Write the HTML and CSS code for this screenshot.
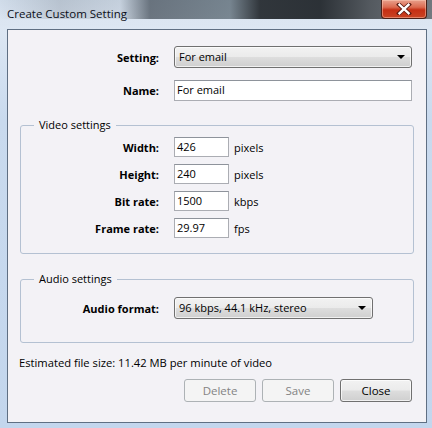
FILE: index.html
```html
<!DOCTYPE html>
<html>
<head>
<meta charset="utf-8">
<link rel="stylesheet" href="styles.css">
</head>
<body>
<div class="window">
  <div class="titlebar">
    <span class="title">Create Custom Setting</span>
    <span class="close-btn">
      <svg width="16" height="12" viewBox="0 0 16 12"><path d="M3 1.5 L13 10.5 M13 1.5 L3 10.5" stroke="#5a1a10" stroke-width="4" stroke-linecap="square"/><path d="M3.5 1.8 L12.5 10.2 M12.5 1.8 L3.5 10.2" stroke="#ffffff" stroke-width="2.4" stroke-linecap="square"/></svg>
    </span>
  </div>
  <div class="client">
    <div class="row row-setting">
      <span class="lbl">Setting:</span>
      <span class="combo combo-setting">For email<span class="arrow"></span></span>
    </div>
    <div class="row row-name">
      <span class="lbl">Name:</span>
      <span class="textbox textbox-name">For email</span>
    </div>

    <fieldset class="group group-video">
      <legend>Video settings</legend>
      <div class="frow">
        <span class="lbl lbl-in">Width:</span>
        <span class="textbox textbox-num">426</span>
        <span class="unit">pixels</span>
      </div>
      <div class="frow">
        <span class="lbl lbl-in">Height:</span>
        <span class="textbox textbox-num">240</span>
        <span class="unit">pixels</span>
      </div>
      <div class="frow">
        <span class="lbl lbl-in">Bit rate:</span>
        <span class="textbox textbox-num">1500</span>
        <span class="unit">kbps</span>
      </div>
      <div class="frow">
        <span class="lbl lbl-in">Frame rate:</span>
        <span class="textbox textbox-num">29.97</span>
        <span class="unit">fps</span>
      </div>
    </fieldset>

    <fieldset class="group group-audio">
      <legend>Audio settings</legend>
      <div class="frow">
        <span class="lbl lbl-in">Audio format:</span>
        <span class="combo combo-audio">96 kbps, 44.1 kHz, stereo<span class="arrow"></span></span>
      </div>
    </fieldset>

    <p class="estimate">Estimated file size: 11.42 MB per minute of video</p>

    <div class="buttons">
      <span class="btn btn-disabled">Delete</span>
      <span class="btn btn-disabled">Save</span>
      <span class="btn">Close</span>
    </div>
  </div>
</div>
</body>
</html>
```
FILE: styles.css
```css
html, body {
  margin: 0;
  padding: 0;
}
body {
  font-family: "Open Sans", "Noto Sans", sans-serif;
  font-size: 11px;
  color: #000;
  background: #c8d8ec;
}
.window {
  width: 432px;
  height: 428px;
  box-sizing: border-box;
  padding: 0 5px 5px 7px;
  display: flex;
  flex-direction: column;
  background:
    linear-gradient(to right,
      rgba(110,120,130,0) 0px,
      rgba(110,120,130,0.25) 60px,
      rgba(150,160,170,0.2) 120px,
      rgba(70,80,90,0.75) 150px,
      rgba(80,95,105,0.7) 230px,
      rgba(40,45,50,0.95) 260px,
      rgba(35,40,45,0.95) 320px,
      rgba(70,75,80,0.9) 370px,
      rgba(90,95,100,0.8) 432px) top left / 100% 19px no-repeat,
    linear-gradient(to bottom, rgba(255,255,255,0) 0, rgba(255,255,255,0) 14px, rgba(220,230,242,0.9) 22px, rgba(220,230,242,0) 30px) top left / 100% 30px no-repeat,
    linear-gradient(to bottom, #cfdbe9 0, #dde7f3 28px, #c9daee 120px, #c3d6ed 428px);
}
.titlebar {
  height: 29px;
  display: flex;
  justify-content: space-between;
  align-items: flex-start;
  flex-shrink: 0;
}
.title {
  margin-top: 5px;
  line-height: 17px;
  font-size: 11.5px;
  color: #0b0f18;
}
.close-btn {
  width: 46px;
  height: 19px;
  box-sizing: border-box;
  border: 1px solid #4a2018;
  border-top: none;
  border-radius: 0 0 4px 4px;
  background: linear-gradient(to bottom, #e8a08c 0, #db6a50 40%, #c52f14 55%, #c94424 100%);
  box-shadow: inset 0 0 0 1px rgba(255,210,190,0.45);
  display: flex;
  align-items: center;
  justify-content: center;
}
.close-btn svg {
  display: block;
}
.client {
  width: 420px;
  height: 394px;
  box-sizing: border-box;
  border: 1px solid #5f6f83;
  background: #f3f2f6;
  padding: 16px 14px 0 12px;
  display: flex;
  flex-direction: column;
}
.row {
  display: flex;
  align-items: center;
}
.row-name {
  margin-top: 12px;
}
.lbl {
  width: 139px;
  flex-shrink: 0;
  text-align: right;
  font-weight: bold;
  margin-right: 15px;
}
.lbl-in {
  width: 138px;
}
.combo {
  position: relative;
  height: 22px;
  box-sizing: border-box;
  border: 1px solid #707070;
  border-radius: 3px;
  background: linear-gradient(to bottom, #f2f2f2 0, #ebebeb 48%, #dddddd 52%, #cfcfcf 100%);
  padding-left: 4px;
  line-height: 20px;
  box-shadow: inset 0 0 0 1px rgba(255,255,255,0.7);
}
.combo-setting {
  width: 238px;
}
.combo-audio {
  width: 199px;
}
.arrow {
  position: absolute;
  right: 6px;
  top: 8px;
  width: 0;
  height: 0;
  border-left: 4px solid transparent;
  border-right: 4px solid transparent;
  border-top: 4px solid #000;
}
.textbox {
  height: 21px;
  box-sizing: border-box;
  border: 1px solid #abadb3;
  border-top-color: #8e939b;
  background: #fff;
  padding-left: 2px;
  line-height: 18px;
}
.textbox-name {
  width: 240px;
}
.textbox-num {
  width: 55px;
  height: 20px;
  line-height: 17px;
}
.unit {
  margin-left: 5px;
}
.group {
  margin: 0;
  padding: 0;
  width: 394px;
  box-sizing: border-box;
  border: 1px solid #b4c1d2;
  border-radius: 3px;
}
.group legend {
  margin-left: 13px;
  padding: 0 5px;
  line-height: 16px;
  color: #000;
}
.group-video {
  margin-top: 16px;
  padding: 4px 0 15px 0;
}
.group-video .frow + .frow {
  margin-top: 7px;
}
.group-audio {
  margin-top: 17px;
  padding: 10px 0 23px 0;
}
.frow {
  display: flex;
  align-items: center;
}
.estimate {
  margin: 12px 0 0 -1px;
  line-height: 16px;
  font-size: 11.2px;
}
.buttons {
  margin-top: 8px;
  display: flex;
  padding-left: 164px;
  gap: 6px;
}
.btn {
  width: 72px;
  height: 23px;
  box-sizing: border-box;
  border: 1px solid #707070;
  border-radius: 3px;
  background: linear-gradient(to bottom, #f2f2f2 0, #ebebeb 48%, #dddddd 52%, #cfcfcf 100%);
  box-shadow: inset 0 0 0 1px rgba(255,255,255,0.7);
  display: flex;
  align-items: center;
  justify-content: center;
  font-size: 11.5px;
}
.btn-disabled {
  border-color: #adb2b5;
  background: #f4f4f4;
  box-shadow: none;
  color: #838383;
}
```
